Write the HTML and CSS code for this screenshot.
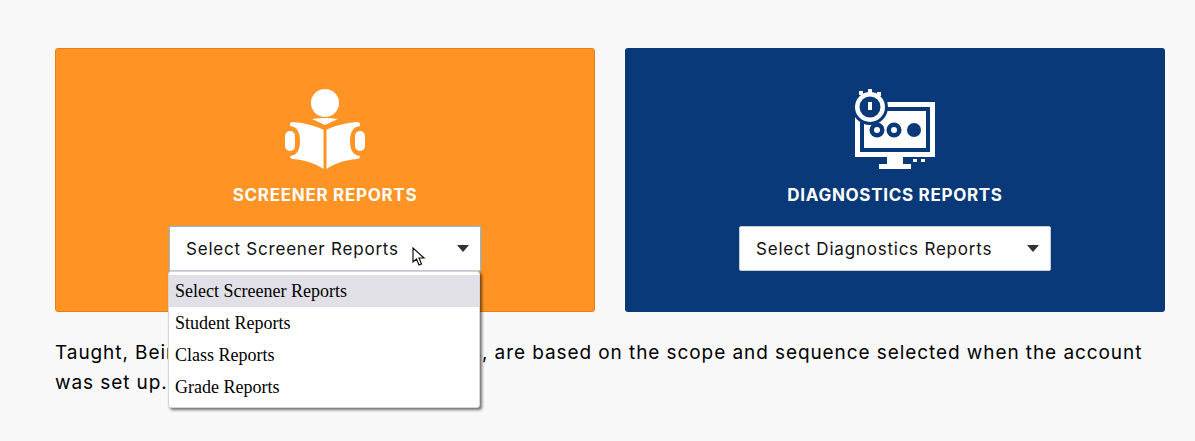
FILE: index.html
```html
<!DOCTYPE html>
<html lang="en">
<head>
  <meta charset="UTF-8" />
  <meta name="viewport" content="width=device-width, initial-scale=1.0"/>
  <title>Reports</title>
  <link rel="stylesheet" href="styles.css">
</head>
<body>

  <div class="cards">
    <div class="card card-orange">
      <svg class="card-icon" width="80" height="82" viewBox="0 0 80 82" fill="#fff">
        <circle cx="40" cy="14" r="14"/>
        <path d="M27 30 Q40 28 53 30 L40 36 Z"/>
        <path d="M38.500 80 C32 75 20 71 8 70 Q5 70 5 67 Q15 66 15 52 Q15 38 5 37 L5 35 Q5 33 8 33 C20 34 32 37 38.500 41 Z"/>
        <path d="M41.500 80 C48 75 60 71 72 70 Q75 70 75 67 Q65 66 65 52 Q65 38 75 37 L75 35 Q75 33 72 33 C60 34 48 37 41.500 41 Z"/>
        <rect x="0" y="42" width="10" height="20" rx="5"/>
        <rect x="70" y="42" width="10" height="20" rx="5"/>
      </svg>
      <h2 class="card-title">SCREENER REPORTS</h2>
      <div class="select-wrap">
        <div class="select select-focus">
          <span>Select Screener Reports</span>
          <span class="caret"></span>
        </div>
        <ul class="menu">
          <li class="menu-active">Select Screener Reports</li>
          <li>Student Reports</li>
          <li>Class Reports</li>
          <li>Grade Reports</li>
        </ul>
        <svg class="pointer" width="14" height="20" viewBox="0 0 14 20">
          <path d="M1 1 L1 15 L4.500 12 L7 18 L9.500 17 L7 11 L12 11 Z" fill="#fff" stroke="#111" stroke-width="1.200"/>
        </svg>
      </div>
    </div>

    <div class="card card-blue">
      <svg class="card-icon" width="82" height="80" viewBox="0 0 82 80" fill="#fff">
        <path d="M1 13 H81 V68 H1 Z M6 18 V63 H76 V18 Z" fill-rule="evenodd"/>
        <rect x="10" y="22" width="62" height="37"/>
        <circle cx="23" cy="41" r="7.500" fill="#0a3979"/>
        <circle cx="23" cy="41" r="3"/>
        <circle cx="40" cy="41" r="7.500" fill="#0a3979"/>
        <circle cx="40" cy="41" r="3"/>
        <circle cx="60" cy="41" r="7" fill="#0a3979"/>
        <circle cx="16" cy="18" r="18" fill="#0a3979"/>
        <circle cx="16" cy="18" r="15"/>
        <circle cx="16" cy="18" r="10.500" fill="#0a3979"/>
        <rect x="14" y="13" width="4" height="8"/>
        <rect x="14" y="0" width="4" height="4"/>
        <rect x="5" y="2" width="4" height="4"/>
        <rect x="23" y="3" width="4" height="4"/>
        <rect x="33" y="68" width="16" height="7"/>
        <rect x="25" y="75" width="32" height="5"/>
        <rect x="59" y="70" width="4" height="3"/>
        <rect x="67" y="70" width="4" height="3"/>
      </svg>
      <h2 class="card-title">DIAGNOSTICS REPORTS</h2>
      <div class="select-wrap">
        <div class="select">
          <span>Select Diagnostics Reports</span>
          <span class="caret"></span>
        </div>
      </div>
    </div>
  </div>

  <p class="note">Taught, Being Taught, and Not Taught tests, are based on the scope and sequence selected when the account was set up.</p>

</body>
</html>
```

FILE: styles.css
```css
:root {
  --orange: #ff9425;
  --navy: #0a3979;
}

html,
body {
  height: 100%;
}

body {
  font-family: Inter, 'Open Sans', sans-serif;
  background-color: #f8f8f8;
  color: #000;
  margin: 0;
  padding: 48px 30px 0 55px;
  box-sizing: border-box;
}

.cards {
  display: flex;
  gap: 30px;
}

.card {
  width: 540px;
  height: 264px;
  box-sizing: border-box;
  border-radius: 3px;
  display: flex;
  flex-direction: column;
  align-items: center;
  color: #fff;
}

.card-orange {
  background-color: var(--orange);
  border: 1px solid #e8801a;
  padding-top: 40px;
}

.card-blue {
  background-color: var(--navy);
  padding-top: 41px;
}

.card-icon {
  display: block;
}

.card-title {
  font-size: 17px;
  line-height: 20px;
  font-weight: 700;
  letter-spacing: 0.7px;
  margin: 14px 0 21px;
}

.card-blue .card-title {
  margin-top: 16px;
}

.select-wrap {
  position: relative;
  z-index: 1;
}

.select {
  width: 312px;
  height: 45px;
  box-sizing: border-box;
  background-color: #fff;
  border: 1px solid #c8cbd6;
  border-radius: 2px;
  padding: 0 11px 0 16px;
  display: flex;
  align-items: center;
  justify-content: space-between;
  color: #111;
  font-size: 17px;
  letter-spacing: 0.78px;
}

.select-focus {
  border-color: #8fb4de #8fb4de #c8cbd6;
  box-shadow: 0 0 1px #7fb2e6;
}

.caret {
  width: 0;
  height: 0;
  border-left: 6.5px solid transparent;
  border-right: 6.5px solid transparent;
  border-top: 7px solid #333;
}

.menu {
  position: absolute;
  left: -1px;
  top: 45px;
  width: 312px;
  box-sizing: border-box;
  margin: 0;
  padding: 3px 0 4px;
  list-style: none;
  background-color: #fff;
  border: 1px solid #d5d5dc;
  border-radius: 3px;
  box-shadow: 2px 2px 3px rgba(0, 0, 0, 0.55);
  color: #000;
  font-family: 'Liberation Serif', serif;
  font-size: 18px;
  letter-spacing: 0;
}

.menu li {
  height: 32px;
  line-height: 32px;
  padding-left: 6px;
}

.menu .menu-active {
  background-color: #e1e0e6;
}

.pointer {
  position: absolute;
  left: 243px;
  top: 21px;
}

.note {
  width: 1100px;
  margin: 26px 0 0;
  font-size: 19px;
  line-height: 30px;
  letter-spacing: 0.92px;
}
```
